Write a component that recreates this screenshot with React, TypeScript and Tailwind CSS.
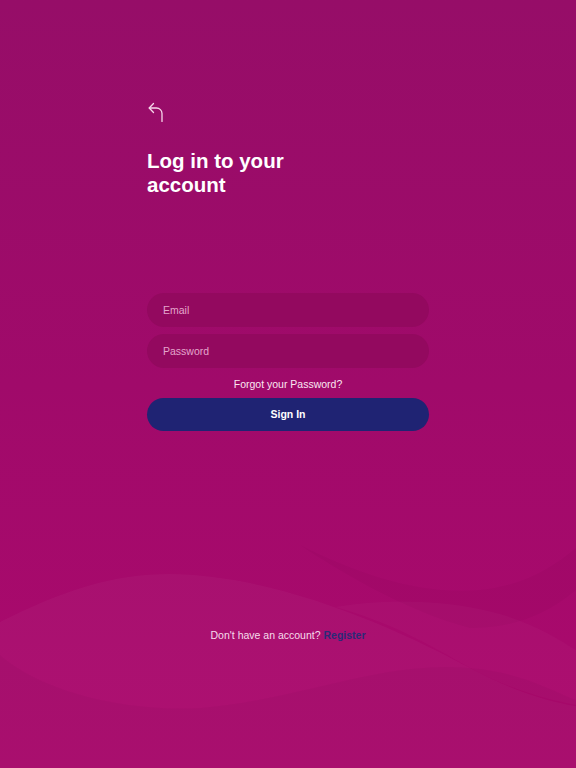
import { useState } from "react";

function BackIcon() {
  return (
    <svg width="16" height="20" viewBox="0 0 16 20" fill="none" className="block">
      <path d="M5.5 1.5 L1.2 6 L5.5 10.5" stroke="#f6d7ea" strokeWidth="1.3" strokeLinecap="round" strokeLinejoin="round" />
      <path d="M1.4 6 H8.5 a5.5 5.5 0 0 1 5.5 5.5 V19.5" stroke="#f6d7ea" strokeWidth="1.3" strokeLinecap="round" />
    </svg>
  );
}

// soft background waves near the bottom
function Waves() {
  return (
    <svg
      className="pointer-events-none absolute inset-0"
      width="576"
      height="768"
      viewBox="0 0 576 768"
    >
      <path
        d="M0 622 C 60 592, 110 574, 170 574 C 280 575, 400 630, 470 668 C 510 690, 550 702, 576 706 L 576 768 L 0 768 Z"
        fill="#ffffff"
        opacity="0.03"
      />
      <path
        d="M335 607 C 390 598, 450 600, 500 614 C 535 624, 560 640, 576 650 L 576 705 C 550 700, 510 690, 470 668 C 430 645, 390 622, 335 607 Z"
        fill="#ffffff"
        opacity="0.025"
      />
      <path
        d="M0 655 C 40 690, 120 712, 200 708 C 300 700, 380 660, 470 668 C 520 672, 550 690, 576 700 L 576 768 L 0 768 Z"
        fill="#000000"
        opacity="0.025"
      />
      <path
        d="M300 545 C 360 575, 420 595, 480 590 C 520 586, 550 570, 576 548 L 576 590 C 540 620, 505 628, 470 628 C 420 615, 360 585, 300 545 Z"
        fill="#000000"
        opacity="0.025"
      />
    </svg>
  );
}

export default function App() {
  const [email, setEmail] = useState("");
  const [password, setPassword] = useState("");

  return (
    <div
      className="relative flex h-[768px] w-full flex-col overflow-hidden bg-gradient-to-b from-[#960d68] via-[#a00a6a] to-[#ac096d]"
      style={{ fontFamily: '"Liberation Sans", Arial, sans-serif' }}
    >
      <Waves />

      <div className="relative mx-auto flex w-[282px] flex-col pt-[102px]">
        <button className="w-fit pl-px">
          <BackIcon />
        </button>

        <h1 className="mt-[27px] text-[20.5px] font-bold leading-[24px] text-white">
          Log in to your
          <br />
          account
        </h1>

        {/* Form */}
        <div className="mt-[96px] flex flex-col gap-[7px]">
          <input
            value={email}
            onChange={(e) => setEmail(e.target.value)}
            placeholder="Email"
            className="h-[34px] rounded-full bg-[#93095f] px-4 text-[10.5px] text-white outline-none placeholder:text-[#e3a6cb]"
          />
          <input
            type="password"
            value={password}
            onChange={(e) => setPassword(e.target.value)}
            placeholder="Password"
            className="h-[34px] rounded-full bg-[#93095f] px-4 text-[10.5px] text-white outline-none placeholder:text-[#e3a6cb]"
          />
        </div>

        <a className="mt-[8px] text-center text-[10.5px] leading-[16px] text-[#fbe7f2]">
          Forgot your Password?
        </a>

        <button className="mt-[6px] h-[33px] rounded-full bg-[#1f2373] text-[10.5px] font-bold text-white">
          Sign In
        </button>
      </div>

      <p className="relative mt-auto pb-[125px] text-center text-[10.5px] leading-[16px] text-[#f6dcec]">
        Don&apos;t have an account?{" "}
        <a className="font-bold text-[#2b2a78]">Register</a>
      </p>
    </div>
  );
}
